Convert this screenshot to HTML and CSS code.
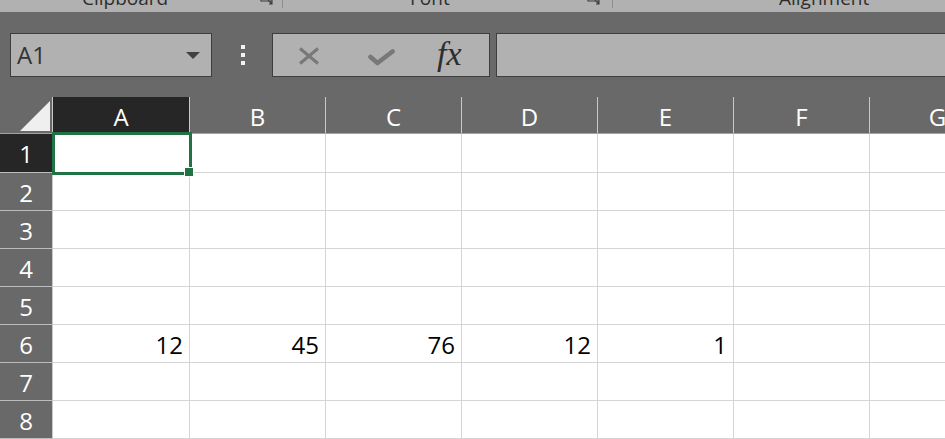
FILE: index.html
```html
<!DOCTYPE html>
<html>
<head>
<meta charset="utf-8">
<link rel="stylesheet" href="styles.css">
</head>
<body>
<div class="ribbon">
  <div class="group g1"><span class="label">Clipboard</span><svg class="launcher" width="13" height="5" viewBox="0 0 13 5"><path d="M1 0 V1 H12 V0 M8 0 L12 4 M9 4 H12 V1" stroke="#3a3a3a" stroke-width="1.1" fill="none"/></svg></div>
  <div class="group g2"><span class="label">Font</span><svg class="launcher" width="13" height="5" viewBox="0 0 13 5"><path d="M1 0 V1 H12 V0 M8 0 L12 4 M9 4 H12 V1" stroke="#3a3a3a" stroke-width="1.1" fill="none"/></svg></div>
  <div class="group g3"><span class="label">Alignment</span></div>
</div>

<div class="formula-bar">
  <div class="namebox"><span class="ref">A1</span><span class="caret"></span></div>
  <div class="dots"><i></i><i></i><i></i></div>
  <div class="fbuttons">
    <svg class="ico-x" width="22" height="18" viewBox="0 0 22 18"><path d="M2 1.5 L20 16.5 M20 1.5 L2 16.5" stroke="#787878" stroke-width="3" fill="none"/></svg>
    <svg class="ico-check" width="27" height="17" viewBox="0 0 27 17"><path d="M2.5 8 L9.5 14 L24.5 2.5" stroke="#787878" stroke-width="4.6" fill="none" stroke-linejoin="round" stroke-linecap="round"/></svg>
    <span class="fx">fx</span>
  </div>
  <div class="finput"></div>
</div>

<div class="sheet">
  <div class="corner"><svg width="52" height="36" viewBox="0 0 52 36"><polygon points="20,34 50,4 50,34" fill="#efefef"/></svg></div>
  <div class="ch sel">A</div><div class="ch">B</div><div class="ch">C</div><div class="ch">D</div><div class="ch">E</div><div class="ch">F</div><div class="ch">G</div>

  <div class="rh sel">1</div><div class="c"></div><div class="c"></div><div class="c"></div><div class="c"></div><div class="c"></div><div class="c"></div><div class="c"></div>
  <div class="rh">2</div><div class="c"></div><div class="c"></div><div class="c"></div><div class="c"></div><div class="c"></div><div class="c"></div><div class="c"></div>
  <div class="rh">3</div><div class="c"></div><div class="c"></div><div class="c"></div><div class="c"></div><div class="c"></div><div class="c"></div><div class="c"></div>
  <div class="rh">4</div><div class="c"></div><div class="c"></div><div class="c"></div><div class="c"></div><div class="c"></div><div class="c"></div><div class="c"></div>
  <div class="rh">5</div><div class="c"></div><div class="c"></div><div class="c"></div><div class="c"></div><div class="c"></div><div class="c"></div><div class="c"></div>
  <div class="rh">6</div><div class="c num">12</div><div class="c num">45</div><div class="c num">76</div><div class="c num">12</div><div class="c num">1</div><div class="c"></div><div class="c"></div>
  <div class="rh">7</div><div class="c"></div><div class="c"></div><div class="c"></div><div class="c"></div><div class="c"></div><div class="c"></div><div class="c"></div>
  <div class="rh">8</div><div class="c"></div><div class="c"></div><div class="c"></div><div class="c"></div><div class="c"></div><div class="c"></div><div class="c"></div>

  <div class="selection"><span class="handle"></span></div>
</div>
</body>
</html>
```

FILE: styles.css
```css
* { box-sizing: border-box; }
html, body {
  margin: 0;
  padding: 0;
  width: 945px;
  height: 439px;
  overflow: hidden;
  background: #696969;
  font-family: "Open Sans", "Noto Sans", sans-serif;
}

/* ribbon strip */
.ribbon {
  height: 12px;
  background: #b1b1b1;
  display: flex;
  align-items: flex-start;
  overflow: hidden;
}
.group {
  height: 8px;
  display: flex;
  align-items: flex-start;
  border-right: 1px solid #8e8e8e;
}
.label {
  font-size: 19px;
  line-height: 20px;
  margin-top: -12px;
  color: #2e2e2e;
  white-space: nowrap;
}
.launcher { margin-left: auto; display: block; }
.g1 { width: 283px; padding-left: 82px; }
.g1 .launcher { margin-right: 9px; }
.g2 { width: 330px; padding-left: 127px; }
.g2 .launcher { margin-right: 12px; }
.g3 { flex: 1; padding-left: 166px; border-right: none; }

/* formula bar */
.formula-bar {
  margin-top: 21px;
  height: 44px;
  display: flex;
  align-items: stretch;
}
.namebox {
  margin-left: 10px;
  width: 202px;
  border: 1px solid #3e3e3e;
  background: #b1b1b1;
  display: flex;
  align-items: center;
  padding-left: 6px;
}
.ref {
  font-size: 24px;
  line-height: 24px;
  color: #333;
}
.caret {
  margin-left: auto;
  margin-right: 11px;
  width: 0;
  height: 0;
  border-left: 7px solid transparent;
  border-right: 7px solid transparent;
  border-top: 7px solid #404040;
}
.dots {
  margin-left: 29px;
  width: 4px;
  display: flex;
  flex-direction: column;
  justify-content: center;
  gap: 4px;
}
.dots i {
  display: block;
  width: 4px;
  height: 4px;
  background: #f2f2f2;
}
.fbuttons {
  margin-left: 27px;
  width: 218px;
  border: 1px solid #3e3e3e;
  background: #b1b1b1;
  display: flex;
  align-items: center;
  padding-left: 25px;
}
.ico-x { display: block; margin-top: 2px; }
.ico-check { display: block; margin-left: 48px; margin-top: 4px; }
.fx {
  margin-left: 42px;
  font-family: "Liberation Serif", "DejaVu Serif", serif;
  font-style: italic;
  font-size: 34px;
  line-height: 34px;
  color: #2d2d2d;
  margin-top: -3px;
}
.finput {
  margin-left: 6px;
  flex: 1;
  margin-right: -10px;
  border: 1px solid #3e3e3e;
  background: #b1b1b1;
}

/* sheet grid */
.sheet {
  position: relative;
  margin-top: 20px;
  display: grid;
  grid-template-columns: 53px 137px repeat(6, 136px);
  grid-template-rows: 37px 39px repeat(7, 38px);
}
.corner {
  border-right: 1px solid #c9c9c9;
  border-bottom: 1px solid #a2a2a2;
}
.corner svg { display: block; }
.ch {
  border-right: 1px solid #c9c9c9;
  border-bottom: 1px solid #a2a2a2;
  color: #fff;
  text-align: center;
  font-size: 24px;
  line-height: 24px;
  padding-top: 8px;
}
.rh {
  border-right: 1px solid #c9c9c9;
  border-bottom: 1px solid #bdbdbd;
  color: #fff;
  text-align: center;
  font-size: 24px;
  line-height: 24px;
  padding-top: 8px;
}
.sel { background: #262626; }
.c {
  background: #fff;
  border-right: 1px solid #d4d4d4;
  border-bottom: 1px solid #d4d4d4;
}
.num {
  text-align: right;
  padding-right: 6px;
  padding-top: 8px;
  font-size: 24px;
  line-height: 24px;
  color: #000;
}
.selection {
  position: absolute;
  left: 52px;
  top: 35px;
  width: 140px;
  height: 43px;
  border: 3px solid #217346;
}
.handle {
  position: absolute;
  left: 129px;
  top: 32px;
  width: 10px;
  height: 10px;
  background: #217346;
  border: 1px solid #fff;
}
```
